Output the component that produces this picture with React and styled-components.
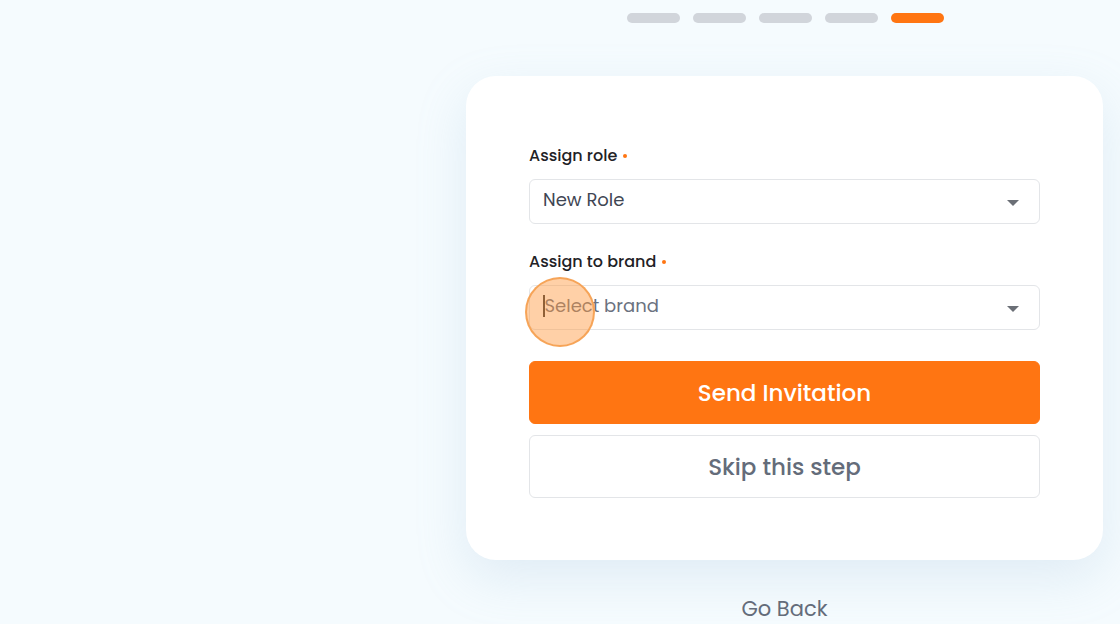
import React from 'react'
import styled, { createGlobalStyle } from 'styled-components'

const Global = createGlobalStyle`
  html, body {
    margin: 0;
    padding: 0;
    background: #f5fbfe;
    font-family: Poppins, Inter, "Noto Sans", sans-serif;
  }
`

const Page = styled.div`
  width: 1120px;
  height: 624px;
  overflow: hidden;
  padding-left: 466px;
  box-sizing: border-box;
`

const Column = styled.div`
  width: 637px;
  display: flex;
  flex-direction: column;
  align-items: center;
`

const Steps = styled.div`
  display: flex;
  gap: 13px;
  margin-top: 13px;
  margin-left: 1px;
`

const Step = styled.div`
  width: 53px;
  height: 10px;
  border-radius: 5px;
  background: ${({ active }) => active ? '#ff7512' : '#d1d5db'};
`

const Card = styled.div`
  width: 100%;
  box-sizing: border-box;
  margin-top: 53px;
  padding: 70px 63px 62px;
  background: #fff;
  border-radius: 30px;
  box-shadow: 0 18px 50px rgba(150, 185, 215, 0.22);
  display: flex;
  flex-direction: column;
`

const Field = styled.div`
  display: flex;
  flex-direction: column;
  margin-bottom: ${({ last }) => last ? '31px' : '28px'};
`

const Label = styled.label`
  font-size: 16px;
  font-weight: 500;
  color: #1f2226;
  line-height: 20px;
  margin-bottom: 13px;
  display: flex;
  align-items: center;
  gap: 6px;
`

const Dot = styled.span`
  width: 4px;
  height: 4px;
  border-radius: 50%;
  background: #ff7512;
`

const Select = styled.div`
  position: relative;
  height: 45px;
  box-sizing: border-box;
  border: 1px solid #e3e5e8;
  border-radius: 6px;
  display: flex;
  align-items: center;
  padding: 0 13px 4px;
  font-size: 18px;
  color: ${({ placeholder }) => placeholder ? '#6b7280' : '#3f4653'};
`

const Caret = styled.span`
  position: absolute;
  right: 20px;
  top: 20px;
  width: 0;
  height: 0;
  border-left: 6px solid transparent;
  border-right: 6px solid transparent;
  border-top: 6px solid #6b6f76;
`

const TextCursor = styled.span`
  display: inline-block;
  width: 1.5px;
  height: 22px;
  background: #333;
`

const Touch = styled.span`
  position: absolute;
  left: -5px;
  top: -9px;
  width: 70px;
  height: 70px;
  border-radius: 50%;
  background: rgba(255, 150, 60, 0.45);
  border: 2px solid rgba(245, 160, 80, 0.9);
  box-sizing: border-box;
`

const Button = styled.button`
  height: 63px;
  border-radius: 6px;
  font-family: inherit;
  font-size: 23px;
  font-weight: 500;
  cursor: pointer;
  background: ${({ primary }) => primary ? '#ff7512' : '#fff'};
  color: ${({ primary }) => primary ? '#fff' : '#646c7a'};
  border: 1px solid ${({ primary }) => primary ? '#ff7512' : '#e3e5e8'};
  margin-bottom: ${({ primary }) => primary ? '11px' : '0'};
`

const Back = styled.div`
  margin-top: 37px;
  font-size: 21px;
  color: #646c7a;
  line-height: 24px;
`

export default function App() {
  return (
    <Page>
      <Global />
      <Column>
        <Steps>
          <Step />
          <Step />
          <Step />
          <Step />
          <Step active />
        </Steps>
        <Card>
          <Field>
            <Label>Assign role <Dot /></Label>
            <Select>
              New Role
              <Caret />
            </Select>
          </Field>
          <Field last>
            <Label>Assign to brand <Dot /></Label>
            <Select placeholder="true">
              <TextCursor />Select brand
              <Caret />
              <Touch />
            </Select>
          </Field>
          <Button primary>Send Invitation</Button>
          <Button>Skip this step</Button>
        </Card>
        <Back>Go Back</Back>
      </Column>
    </Page>
  )
}
